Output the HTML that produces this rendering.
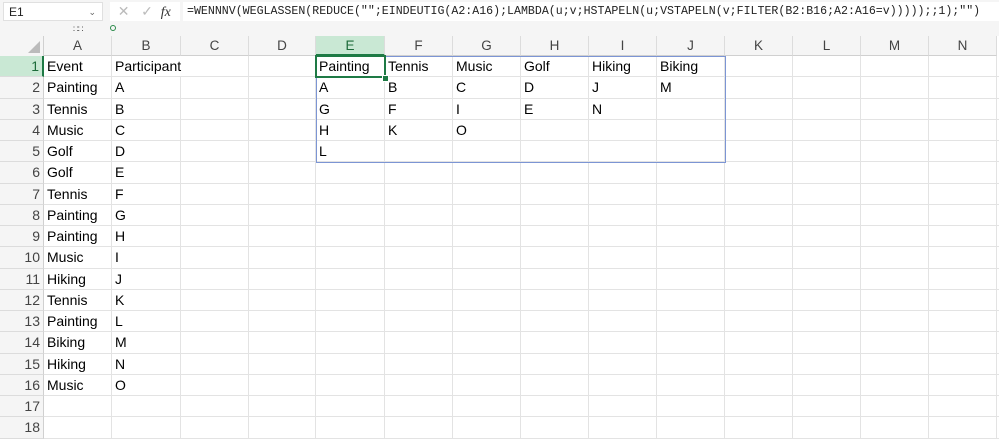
<!DOCTYPE html><html><head><style>
body{margin:0;width:999px;height:439px;overflow:hidden;background:#fff;font-family:"Liberation Sans",sans-serif;position:relative}
.top{position:absolute;left:0;top:0;width:999px;height:36px;background:#f5f5f5}
.nb{position:absolute;left:3px;top:2px;width:100px;height:19px;background:#fff;border:1px solid #e0e0e0;font-size:12px;line-height:19px;box-sizing:border-box;padding-left:5px;color:#222}
.fb{position:absolute;left:183px;top:2px;width:816px;height:19px;background:#fff;font-family:"Liberation Mono",monospace;font-size:11.6px;line-height:19px;padding-left:4px;color:#222;white-space:nowrap;overflow:hidden;box-sizing:border-box}
.ic{position:absolute;top:2px;height:19px;background:#fff}
.c{position:absolute;box-sizing:border-box;font-size:14px;line-height:21px;white-space:nowrap;padding-left:3px;color:#000}
.h{position:absolute;top:36px;height:20px;background:#f5f5f5;border-right:1px solid #dcdcdc;border-bottom:1px solid #d0d0d0;box-sizing:border-box;text-align:center;font-size:13.5px;line-height:20px;color:#444}
.r{position:absolute;left:0;width:44px;background:#f5f5f5;border-bottom:1px solid #dcdcdc;border-right:1px solid #d0d0d0;box-sizing:border-box;text-align:right;padding-right:3px;font-size:14px;color:#444}
</style></head><body>
<div class="top"></div>
<div class="nb">E1<span style="position:absolute;right:6px;font-size:9px;color:#666">⌄</span></div>
<div class="ic" style="left:110px;width:70px;font-size:14px;color:#bbb;line-height:19px">&nbsp;&nbsp;✕&nbsp;&nbsp;&nbsp;✓&nbsp;&nbsp;<i style="color:#333;font-family:'Liberation Serif',serif">fx</i></div>
<div class="fb">=WENNNV(WEGLASSEN(REDUCE("";EINDEUTIG(A2:A16);LAMBDA(u;v;HSTAPELN(u;VSTAPELN(v;FILTER(B2:B16;A2:A16=v)))));;1);"")</div>
<div style="position:absolute;left:73px;top:24px;font-size:9px;color:#555;letter-spacing:-1px">∷∷</div>
<div style="position:absolute;left:110px;top:25px;width:4px;height:4px;border:1px solid #2a8a4a;border-radius:50%"></div>
<div style="position:absolute;left:0;top:36px;width:44px;height:20px;background:#f5f5f5;border-right:1px solid #d0d0d0;box-sizing:border-box"><div style="position:absolute;right:3px;bottom:3px;width:0;height:0;border-left:12px solid transparent;border-bottom:12px solid #bbb"></div></div>
<div id="g"></div>
<script>
var cols=[44,112,181,249,316,385,453,521,589,657,725,793,861,929,997];
var L="ABCDEFGHIJKLMN",h="";
for(var i=0;i<14;i++){h+='<div class="h" style="left:'+cols[i]+'px;width:'+(cols[i+1]-cols[i])+'px;'+(i==4?'background:#c9e8d4;color:#1d6b3a;border-bottom:2px solid #1e7a45':'')+'">'+L[i]+'</div>';}
var rh=21.25,t0=56;
for(var r=0;r<18;r++){var y=t0+r*rh;
h+='<div class="r" style="top:'+y+'px;height:'+rh+'px;line-height:'+rh+'px;'+(r==0?'background:#c9e8d4;color:#1d6b3a;border-right:2px solid #1e7a45':'')+'">'+(r+1)+'</div>';
h+='<div style="position:absolute;left:44px;top:'+(y+rh-1)+'px;width:955px;height:1px;background:#e3e3e3"></div>';}
for(var i=1;i<15;i++){if(i==2)continue;h+='<div style="position:absolute;left:'+(cols[i]-1)+'px;top:56px;width:1px;height:383px;background:#e3e3e3"></div>';}
h+='<div style="position:absolute;left:'+(cols[2]-1)+'px;top:77px;width:1px;height:362px;background:#e3e3e3"></div>';
var A=["Event","Painting","Tennis","Music","Golf","Golf","Tennis","Painting","Painting","Music","Hiking","Tennis","Painting","Biking","Hiking","Music"];
var B=["Participant","A","B","C","D","E","F","G","H","I","J","K","L","M","N","O"];
var sp=[["Painting","Tennis","Music","Golf","Hiking","Biking"],["A","B","C","D","J","M"],["G","F","I","E","N",""],["H","K","O","","",""],["L","","","","",""]];
function cell(c,r,t){h+='<div class="c" style="left:'+cols[c]+'px;top:'+(t0+r*rh)+'px;height:'+rh+'px;">'+t+'</div>';}
for(var r=0;r<16;r++){cell(0,r,A[r]);cell(1,r,B[r]);}
for(var r=0;r<5;r++)for(var c=0;c<6;c++)if(sp[r][c])cell(4+c,r,sp[r][c]);
h+='<div style="position:absolute;left:316px;top:56px;width:410px;height:'+(5*rh+1)+'px;border:1px solid #7c95d4;box-sizing:border-box"></div>';
h+='<div style="position:absolute;left:315px;top:55px;width:71px;height:23px;border:2px solid #1e7a45;box-sizing:border-box"></div>';
h+='<div style="position:absolute;left:382px;top:75px;width:5px;height:5px;background:#1e7a45;border:1px solid #fff"></div>';
document.getElementById("g").innerHTML=h;
</script>
</body></html>
